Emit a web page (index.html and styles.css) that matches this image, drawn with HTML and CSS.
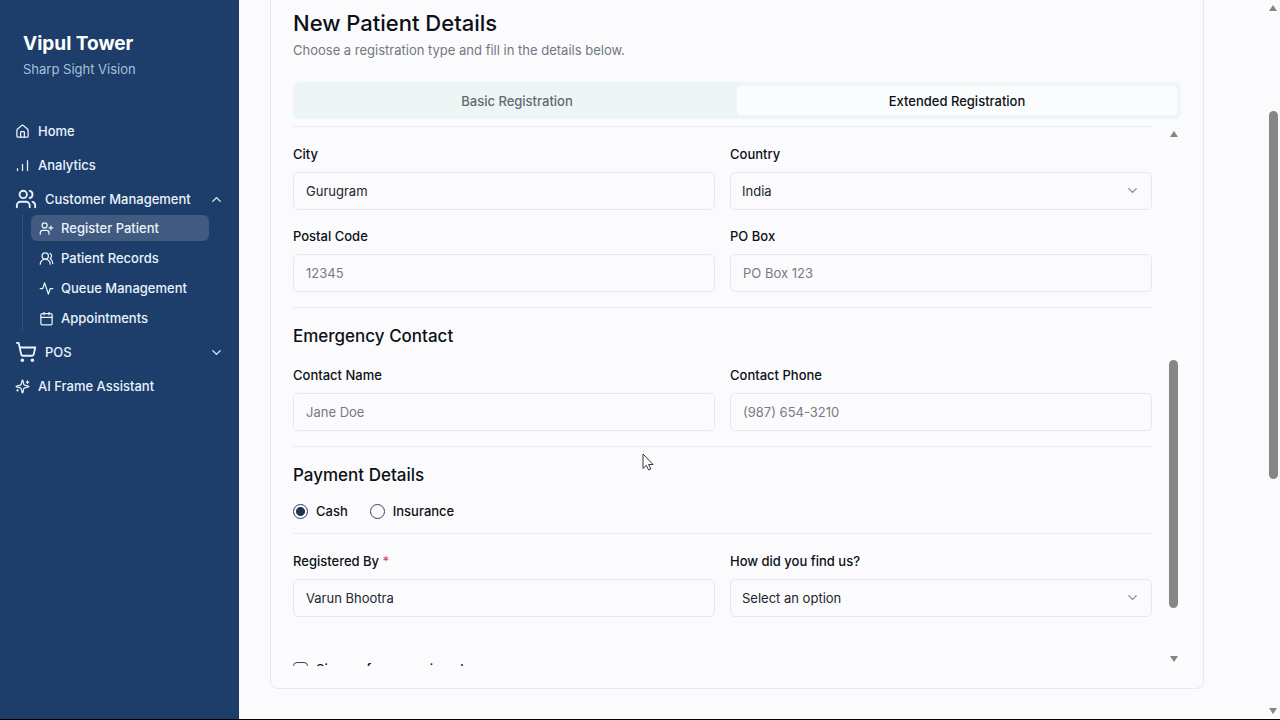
FILE: index.html
```html
<!DOCTYPE html>
<html lang="en">
<head>
    <meta charset="UTF-8">
    <meta name="viewport" content="width=device-width, initial-scale=1.0">
    <title>Register Patient - Vipul Tower</title>
    <link rel="stylesheet" href="styles.css">
</head>
<body>
    <aside class="sidebar">
        <div class="brand">
            <h2>Vipul Tower</h2>
            <p>Sharp Sight Vision</p>
        </div>
        <nav class="menu">
            <a href="#home" class="menu-link">
                <svg class="icon" viewBox="0 0 24 24"><path d="M15 21v-8a1 1 0 0 0-1-1h-4a1 1 0 0 0-1 1v8"/><path d="M3 10a2 2 0 0 1 .7-1.5l7-6a2 2 0 0 1 2.6 0l7 6A2 2 0 0 1 21 10v9a2 2 0 0 1-2 2H5a2 2 0 0 1-2-2z"/></svg>
                Home
            </a>
            <a href="#analytics" class="menu-link">
                <svg class="icon" viewBox="0 0 24 24"><path d="M4 20v-3M12 20V10M20 20V4"/></svg>
                Analytics
            </a>
            <button type="button" class="menu-link">
                <svg class="icon icon-large" viewBox="0 0 24 24"><path d="M16 21v-2a4 4 0 0 0-4-4H6a4 4 0 0 0-4 4v2"/><circle cx="9" cy="7" r="4"/><path d="M22 21v-2a4 4 0 0 0-3-3.9M16 3.1a4 4 0 0 1 0 7.8"/></svg>
                Customer Management
                <svg class="icon chevron" viewBox="0 0 24 24"><path d="m18 15-6-6-6 6"/></svg>
            </button>
            <div class="submenu">
                <a href="#register" class="active">
                    <svg class="icon" viewBox="0 0 24 24"><path d="M2 21v-2a4 4 0 0 1 4-4h6a4 4 0 0 1 4 4v2"/><circle cx="9" cy="7" r="4"/><path d="M19 8v6M22 11h-6"/></svg>
                    Register Patient
                </a>
                <a href="#records">
                    <svg class="icon" viewBox="0 0 24 24"><path d="M18 21a8 8 0 0 0-16 0"/><circle cx="10" cy="8" r="5"/><path d="M22 20c0-3.4-2-6.5-4-8a5 5 0 0 0-.5-8.3"/></svg>
                    Patient Records
                </a>
                <a href="#queue">
                    <svg class="icon" viewBox="0 0 24 24"><path d="M22 12h-4l-3 9L9 3l-3 9H2"/></svg>
                    Queue Management
                </a>
                <a href="#appointments">
                    <svg class="icon" viewBox="0 0 24 24"><path d="M8 2v4M16 2v4M3 10h18"/><rect x="3" y="4" width="18" height="18" rx="2"/></svg>
                    Appointments
                </a>
            </div>
            <button type="button" class="menu-link">
                <svg class="icon icon-large" viewBox="0 0 24 24"><circle cx="8" cy="21" r="1"/><circle cx="19" cy="21" r="1"/><path d="M2.050 2.050h2l2.660 12.420a2 2 0 0 0 2 1.580h9.780a2 2 0 0 0 1.950-1.570l1.650-7.430H5.120"/></svg>
                POS
                <svg class="icon chevron" viewBox="0 0 24 24"><path d="m6 9 6 6 6-6"/></svg>
            </button>
            <a href="#assistant" class="menu-link">
                <svg class="icon" viewBox="0 0 24 24"><path d="M9.900 15.500A2 2 0 0 0 8.500 14.100l-6.100-1.600a.5.5 0 0 1 0-1l6.100-1.600A2 2 0 0 0 9.900 8.500l1.600-6.100a.5.5 0 0 1 1 0l1.600 6.100a2 2 0 0 0 1.400 1.400l6.100 1.600a.5.5 0 0 1 0 1l-6.100 1.600a2 2 0 0 0-1.400 1.400l-1.600 6.100a.5.5 0 0 1-1 0z"/><path d="M20 3v4M22 5h-4M4 17v2M5 18H3"/></svg>
                AI Frame Assistant
            </a>
        </nav>
    </aside>

    <main>
        <section class="card">
            <header>
                <h1>New Patient Details</h1>
                <p>Choose a registration type and fill in the details below.</p>
            </header>

            <div class="tabs" role="tablist">
                <button type="button" role="tab" aria-selected="false">Basic Registration</button>
                <button type="button" role="tab" aria-selected="true">Extended Registration</button>
            </div>

            <div class="form-area">
                <form>
                    <hr>
                    <div class="fields">
                        <div class="field">
                            <label for="city">City</label>
                            <input type="text" id="city" value="Gurugram">
                        </div>
                        <div class="field">
                            <label for="country">Country</label>
                            <div class="select">
                                <select id="country"><option>India</option></select>
                                <svg class="icon" viewBox="0 0 24 24"><path d="m6 9 6 6 6-6"/></svg>
                            </div>
                        </div>
                        <div class="field">
                            <label for="postal">Postal Code</label>
                            <input type="text" id="postal" placeholder="12345">
                        </div>
                        <div class="field">
                            <label for="po-box">PO Box</label>
                            <input type="text" id="po-box" placeholder="PO Box 123">
                        </div>
                    </div>

                    <hr>
                    <h3>Emergency Contact</h3>
                    <div class="fields">
                        <div class="field">
                            <label for="contact-name">Contact Name</label>
                            <input type="text" id="contact-name" placeholder="Jane Doe">
                        </div>
                        <div class="field">
                            <label for="contact-phone">Contact Phone</label>
                            <input type="tel" id="contact-phone" placeholder="(987) 654-3210">
                        </div>
                    </div>

                    <hr>
                    <h3>Payment Details</h3>
                    <div class="choices">
                        <label><input type="radio" name="payment" checked>Cash</label>
                        <label><input type="radio" name="payment">Insurance</label>
                    </div>

                    <hr>
                    <div class="fields source-fields">
                        <div class="field">
                            <label for="registered-by">Registered By <span class="required">*</span></label>
                            <input type="text" id="registered-by" value="Varun Bhootra">
                        </div>
                        <div class="field">
                            <label for="source">How did you find us?</label>
                            <div class="select">
                                <select id="source"><option>Select an option</option></select>
                                <svg class="icon" viewBox="0 0 24 24"><path d="m6 9 6 6 6-6"/></svg>
                            </div>
                        </div>
                    </div>

                    <div class="choices signup">
                        <label><input type="checkbox">Sign up for screening plan</label>
                    </div>
                </form>
                <div class="scrollbar form-scrollbar">
                    <svg viewBox="0 0 10 8"><path d="M5 1 9 7H1z"/></svg>
                    <div class="track"><div class="thumb"></div></div>
                    <svg viewBox="0 0 10 8"><path d="M5 7 1 1h8z"/></svg>
                </div>
            </div>
        </section>
    </main>

    <div class="scrollbar page-scrollbar">
        <svg viewBox="0 0 10 8"><path d="M5 1 9 7H1z"/></svg>
        <div class="track"><div class="thumb"></div></div>
        <svg viewBox="0 0 10 8"><path d="M5 7 1 1h8z"/></svg>
    </div>

    <svg class="cursor" viewBox="0 0 12 18"><path d="M1 1v14.500l3.300-3.100 2.300 4.600 2.200-1-2.200-4.500H11z"/></svg>
</body>
</html>
```
FILE: styles.css
```css
/* Global Styles */
* {
    box-sizing: border-box;
}

body {
    margin: 0;
    height: 100vh;
    display: flex;
    overflow: hidden;
    border-bottom: 1px solid #000;
    font-family: 'Inter', sans-serif;
    font-size: 13px;
    line-height: 20px;
    background-color: #fbfbfd;
    color: #0c1116;
}

h1, h2, h3, p {
    margin: 0;
}

button, input, select {
    font: inherit;
    color: inherit;
}

.icon {
    width: 15px;
    height: 15px;
    flex-shrink: 0;
    fill: none;
    stroke: currentColor;
    stroke-width: 2;
    stroke-linecap: round;
    stroke-linejoin: round;
}

/* Sidebar */
.sidebar {
    width: 239px;
    flex-shrink: 0;
    background-color: #1d3d6b;
    border-right: 1px solid #183660;
    color: #e9f3fb;
    font-weight: 500;
}

.brand {
    padding: 31px 23px 37px;
}

.brand h2 {
    font-size: 19px;
    line-height: 26px;
    font-weight: 700;
    color: #fff;
}

.brand p {
    margin-top: 2px;
    font-weight: 400;
    color: #a9c0da;
}

.menu {
    display: flex;
    flex-direction: column;
    gap: 4px;
    padding: 0 14px 0 15px;
}

.menu-link {
    display: flex;
    align-items: center;
    gap: 8px;
    height: 30px;
    padding: 0;
    border: none;
    background: none;
    text-align: left;
    text-decoration: none;
    color: inherit;
}

.icon-large {
    width: 22px;
    height: 22px;
}

.chevron {
    margin-left: auto;
}

.submenu {
    display: flex;
    flex-direction: column;
    gap: 4px;
    margin: -3px 15px 2px 7px;
    padding-left: 8px;
    border-left: 1px solid #31507c;
}

.submenu a {
    display: flex;
    align-items: center;
    gap: 7px;
    height: 26px;
    padding: 0 8px;
    border-radius: 6px;
    text-decoration: none;
    color: inherit;
}

.submenu .active {
    background-color: #415a80;
}

/* Main Content */
main {
    flex: 1;
    min-width: 0;
    display: flex;
    padding: 0 62px 30px 31px;
}

.card {
    flex: 1;
    min-width: 0;
    display: flex;
    flex-direction: column;
    padding: 8px 22px 22px;
    border: 1px solid #e8e9ec;
    border-top: none;
    border-radius: 0 0 8px 8px;
}

h1 {
    font-size: 22px;
    line-height: 30px;
    font-weight: 500;
}

header p {
    margin-top: 2px;
    color: #71787d;
}

/* Tabs */
.tabs {
    display: flex;
    margin-top: 22px;
    padding: 4px;
    border-radius: 6px;
    background-color: #edf5f5;
}

.tabs button {
    flex: 1;
    height: 29px;
    padding: 0;
    border: none;
    border-radius: 4px;
    background: none;
    font-weight: 500;
    color: #616b75;
}

.tabs button[aria-selected="true"] {
    background-color: #fbfcfd;
    color: #0c1116;
}

/* Form */
.form-area {
    flex: 1;
    min-height: 0;
    display: flex;
    gap: 14px;
    margin-top: 7px;
}

form {
    flex: 1;
    min-width: 0;
    overflow: hidden;
}

hr {
    height: 1px;
    margin: 15px 0;
    border: none;
    background-color: #ebecef;
}

form > hr:first-child {
    margin: 0 0 17px;
}

h3 {
    margin-bottom: 16px;
    font-size: 17px;
    line-height: 26px;
    font-weight: 500;
}

.fields {
    display: grid;
    grid-template-columns: 1fr 1fr;
    gap: 16px 15px;
}

.source-fields {
    padding-top: 2px;
}

.field {
    display: flex;
    flex-direction: column;
    gap: 8px;
}

label {
    font-weight: 500;
}

.field input, select {
    width: 100%;
    height: 38px;
    padding: 0 12px;
    border: 1px solid #e8e9ed;
    border-radius: 5px;
    background-color: #fbfbfd;
    appearance: none;
    color: #20262c;
}

select {
    padding: 0 11px;
}

::placeholder {
    color: #777c80;
}

.select {
    position: relative;
}

.select .icon {
    position: absolute;
    right: 12px;
    top: 11px;
    color: #85888c;
}

.required {
    color: #d0515c;
}

.choices {
    display: flex;
    gap: 22px;
    margin: -3px 0 12px;
}

.choices + hr {
    margin-top: 0;
}

.choices label {
    display: flex;
    align-items: center;
    gap: 8px;
}

.choices input {
    appearance: none;
    width: 15px;
    height: 15px;
    margin: 0;
    border: 1px solid #3d434a;
    border-radius: 50%;
}

.choices input:checked {
    border-color: #1d3d6b;
    background: radial-gradient(circle, #21324a 4px, transparent 5px);
}

.signup {
    margin: 42px 0 0;
}

.signup input {
    border-radius: 4px;
}

/* Scrollbars */
.scrollbar {
    display: flex;
    flex-direction: column;
    align-items: center;
    width: 14px;
    fill: #858585;
}

.scrollbar svg {
    width: 10px;
    height: 8px;
}

.track {
    flex: 1;
    display: flex;
}

.thumb {
    width: 9px;
    border-radius: 5px;
    background-color: #868686;
}

.form-scrollbar {
    width: 15px;
    padding: 4px 0 3px;
}

.form-scrollbar .thumb {
    height: 48%;
    margin-top: 222px;
}

.page-scrollbar {
    padding: 4px 0;
}

.page-scrollbar .thumb {
    height: 53%;
    margin-top: 99px;
}

/* Pointer */
.cursor {
    position: absolute;
    left: 642px;
    top: 453px;
    width: 12px;
    height: 18px;
    fill: #fff;
    stroke: #33363a;
}
```
